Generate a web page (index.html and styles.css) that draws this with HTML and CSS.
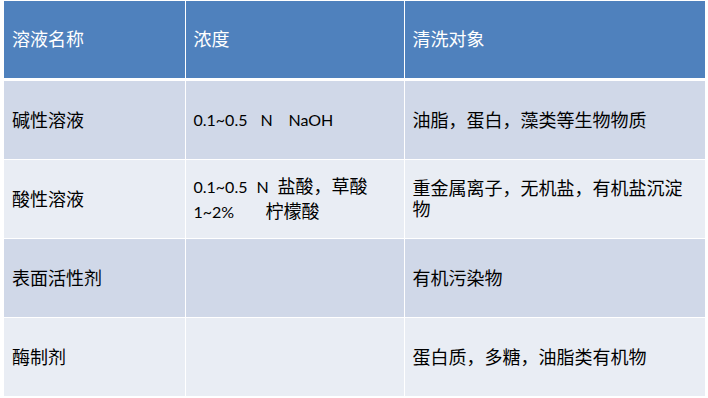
FILE: index.html
```html
<!DOCTYPE html>
<html lang="zh-CN">
<head>
  <meta charset="UTF-8">
  <title>清洗剂</title>
  <link rel="stylesheet" href="styles.css">
</head>
<body>

  <table class="tabela">
    <colgroup>
      <col class="c1">
      <col class="c2">
      <col class="c3">
    </colgroup>
    <thead>
      <tr>
        <th>溶液名称</th>
        <th>浓度</th>
        <th>清洗对象</th>
      </tr>
    </thead>
    <tbody>
      <tr class="par">
        <td>碱性溶液</td>
        <td class="conc"><span class="w67">0.1~0.5</span><span class="w28">N</span>NaOH</td>
        <td>油脂，蛋白，藻类等生物物质</td>
      </tr>
      <tr class="impar">
        <td>酸性溶液</td>
        <td class="conc">
          <div><span class="w63">0.1~0.5</span><span class="w21">N</span><span class="cjk">盐酸，草酸</span></div>
          <div><span class="w72">1~2%</span><span class="cjk">柠檬酸</span></div>
        </td>
        <td>重金属离子，无机盐，有机盐沉淀物</td>
      </tr>
      <tr class="par">
        <td>表面活性剂</td>
        <td></td>
        <td>有机污染物</td>
      </tr>
      <tr class="impar">
        <td>酶制剂</td>
        <td></td>
        <td>蛋白质，多糖，油脂类有机物</td>
      </tr>
    </tbody>
  </table>

</body>
</html>
```

FILE: styles.css
```css
body {
  margin: 1px 0 0 4px;
  background: #fff;
  font-family: "Lato", "Noto Sans CJK SC", sans-serif;
}
.tabela {
  width: 701px;
  table-layout: fixed;
  border-collapse: collapse;
}
.c1 { width: 181px; }
.c2 { width: 219px; }
.c3 { width: 301px; }
th, td {
  padding: 0 8px;
  font-size: 18px;
  line-height: 21px;
  text-align: left;
  vertical-align: middle;
  border: 1px solid #fff;
  color: #000;
  font-weight: normal;
}
th {
  height: 77px;
  background: #4f81bd;
  color: #fff;
  border-top: 0;
  border-bottom: 3px solid #fff;
}
td {
  height: 78px;
}
tr:first-child th:first-child,
tbody td:first-child { border-left: 0; }
tbody tr:last-child td { border-bottom: 0; }
.par td { background: #d0d8e8; }
.impar td { background: #e9edf4; }
.conc {
  font-size: 16px;
  line-height: 24px;
}
.conc span { display: inline-block; }
.cjk { font-size: 18px; }
.w67 { width: 67px; }
.w28 { width: 28px; }
.w63 { width: 63px; }
.w21 { width: 21px; }
.w72 { width: 72px; }
```
